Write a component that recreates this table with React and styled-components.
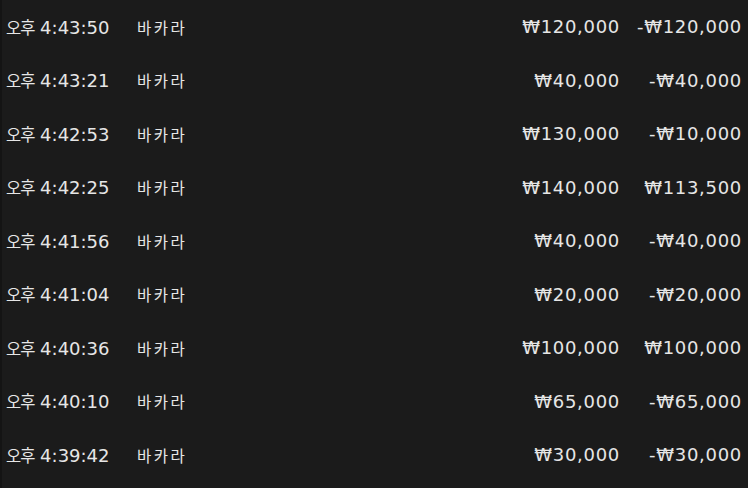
import styled, { createGlobalStyle } from 'styled-components';

const rows = [
  { time: '4:43:50', game: '바카라', bet: '₩120,000', result: '-₩120,000' },
  { time: '4:43:21', game: '바카라', bet: '₩40,000', result: '-₩40,000' },
  { time: '4:42:53', game: '바카라', bet: '₩130,000', result: '-₩10,000' },
  { time: '4:42:25', game: '바카라', bet: '₩140,000', result: '₩113,500' },
  { time: '4:41:56', game: '바카라', bet: '₩40,000', result: '-₩40,000' },
  { time: '4:41:04', game: '바카라', bet: '₩20,000', result: '-₩20,000' },
  { time: '4:40:36', game: '바카라', bet: '₩100,000', result: '₩100,000' },
  { time: '4:40:10', game: '바카라', bet: '₩65,000', result: '-₩65,000' },
  { time: '4:39:42', game: '바카라', bet: '₩30,000', result: '-₩30,000' },
];

const GlobalStyle = createGlobalStyle`
  html, body {
    margin: 0;
    background: #1b1b1b;
  }
`;

const App = () => {
  return (
    <>
      <GlobalStyle />
      <History>
        {rows.map((r) => (
          <Row key={r.time}>
            <Time>
              <Meridiem>오후</Meridiem> {r.time}
            </Time>
            <Game>{r.game}</Game>
            <Money>{r.bet}</Money>
            <Money>{r.result}</Money>
          </Row>
        ))}
      </History>
    </>
  );
};

const History = styled.div`
  width: 748px;
  height: 488px;
  box-sizing: border-box;
  background: #1b1b1b;
  border-left: 2px solid #141414;
  color: #e6e6e6;
  font-family: 'DejaVu Sans', 'Noto Sans CJK KR', sans-serif;
  font-size: 18px;
  overflow: hidden;
`;

const Row = styled.div`
  display: grid;
  grid-template-columns: 131px 1fr 120px 122px;
  align-items: center;
  height: 53.5px;
  padding: 0 6px 0 4px;
`;

const Time = styled.span`
  white-space: nowrap;
`;

const Meridiem = styled.span`
  font-family: 'Noto Sans CJK KR', sans-serif;
  font-size: 16.5px;
  letter-spacing: -1px;
`;

const Game = styled.span`
  font-family: 'Noto Sans CJK KR', sans-serif;
  font-size: 15.5px;
  letter-spacing: 2.5px;
`;

const Money = styled.span`
  white-space: nowrap;
  text-align: right;
  letter-spacing: 0.7px;
`;

export default App;
